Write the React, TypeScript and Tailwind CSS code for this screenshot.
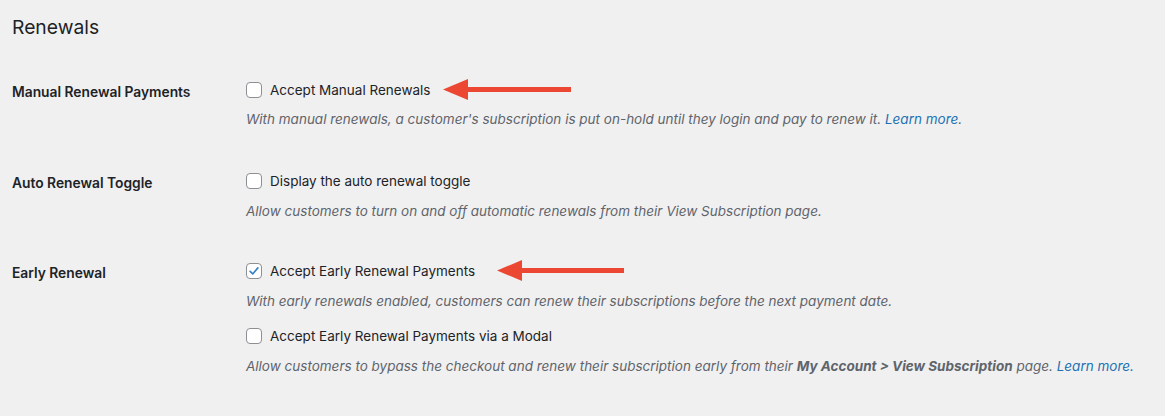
import React from "react";

const font = { fontFamily: "Inter, 'Noto Sans', 'Liberation Sans', sans-serif" };

function Box({ checked }: { checked?: boolean }) {
  return (
    <span className="inline-flex items-center justify-center w-[16px] h-[16px] rounded-[4px] border border-[#8c8f94] bg-white shrink-0">
      {checked && (
        <svg width="14" height="14" viewBox="0 0 20 20">
          <path d="M4.5 10.5 L8.2 14.2 L15.5 5.5" fill="none" stroke="#3582c4" strokeWidth="2.4" strokeLinecap="round" strokeLinejoin="round" />
        </svg>
      )}
    </span>
  );
}

function Arrow({ width }: { width: number }) {
  return (
    <svg width={width} height="24" viewBox={`0 0 ${width} 24`} className="shrink-0">
      <polygon points={`0,11.5 25,1 25,22`} fill="#ec4733" />
      <rect x="22" y="9" width={width - 22} height="5" fill="#ec4733" />
    </svg>
  );
}

function Check({ label, checked, arrow, gap }: { label: string; checked?: boolean; arrow?: number; gap?: "a" | "b" }) {
  return (
    <div className="flex items-center h-[20px]">
      <Box checked={checked} />
      <span className="ml-[8px] text-[13.5px] text-[#1d2327]">{label}</span>
      {arrow ? (
        <span className={gap === "b" ? "ml-[22px] flex items-center" : "ml-[13px] flex items-center"}>
          <Arrow width={arrow} />
        </span>
      ) : null}
    </div>
  );
}

function Desc({ children }: { children: React.ReactNode }) {
  return <p className="h-[20px] leading-[20px] text-[13.5px] italic text-[#5f646b] whitespace-nowrap">{children}</p>;
}

function Label({ children }: { children: React.ReactNode }) {
  return <div className="pt-[2px] h-[20px] leading-[20px] text-[13.8px] font-semibold text-[#1d2327]">{children}</div>;
}

export default function App() {
  return (
    <div className="w-[1165px] h-[416px] bg-[#f0f0f1] overflow-hidden pl-[12px] pt-[15px]" style={font}>
      <h2 className="text-[19.3px] leading-[24px] text-[#1d2327]">Renewals</h2>

      <div className="mt-[41px] grid grid-cols-[234px_1fr]">
        <Label>Manual Renewal Payments</Label>
        <div className="flex flex-col">
          <Check label="Accept Manual Renewals" arrow={128} />
          <div className="mt-[9px]">
            <Desc>
              With manual renewals, a customer's subscription is put on-hold until they login and pay to renew it.{" "}
              <span className="text-[#2271b1]">Learn more</span>.
            </Desc>
          </div>
        </div>
      </div>

      <div className="mt-[42px] grid grid-cols-[234px_1fr]">
        <Label>Auto Renewal Toggle</Label>
        <div className="flex flex-col">
          <Check label="Display the auto renewal toggle" />
          <div className="mt-[10px]">
            <Desc>Allow customers to turn on and off automatic renewals from their View Subscription page.</Desc>
          </div>
        </div>
      </div>

      <div className="mt-[40px] grid grid-cols-[234px_1fr]">
        <Label>Early Renewal</Label>
        <div className="flex flex-col">
          <Check label="Accept Early Renewal Payments" checked arrow={127} gap="b" />
          <div className="mt-[10px]">
            <Desc>With early renewals enabled, customers can renew their subscriptions before the next payment date.</Desc>
          </div>
          <div className="mt-[15px]">
            <Check label="Accept Early Renewal Payments via a Modal" />
          </div>
          <div className="mt-[10px]">
            <Desc>
              Allow customers to bypass the checkout and renew their subscription early from their{" "}
              <b className="font-bold">My Account &gt; View Subscription</b> page.{" "}
              <span className="text-[#2271b1]">Learn more.</span>
            </Desc>
          </div>
        </div>
      </div>
    </div>
  );
}
